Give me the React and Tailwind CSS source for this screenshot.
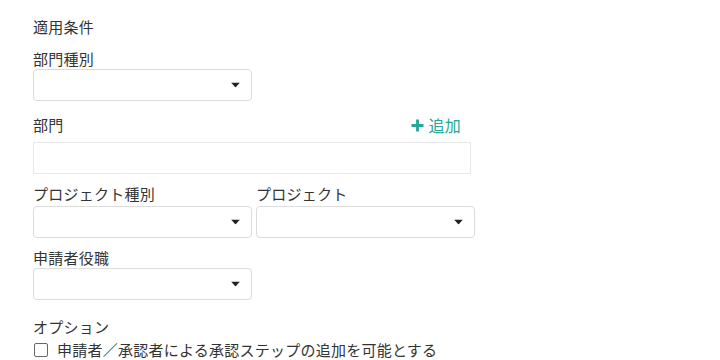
export default function App() {
  const font = { fontFamily: '"Noto Sans CJK JP", "Noto Sans", sans-serif' };

  const Caret = () => (
    <svg width="9" height="5" viewBox="0 0 9 5" className="absolute right-[11px] top-1/2 -translate-y-1/2">
      <path d="M0 0h9L4.5 5z" fill="#222" />
    </svg>
  );

  const Select = ({ className = '' }) => (
    <div className={`relative h-8 w-[219px] rounded border border-[#dcdcdc] bg-white ${className}`}>
      <Caret />
    </div>
  );

  return (
    <div className="w-[720px] h-[360px] bg-white overflow-hidden text-[15px] tracking-[0.25px] text-[#333] px-[33px] pt-[17px]" style={font}>
      <p className="leading-5">適用条件</p>

      {/* 部門種別 */}
      <div className="mt-3">
        <label className="block leading-5">部門種別</label>
        <Select />
      </div>

      {/* 部門 */}
      <div className="mt-[14px] w-[438px]">
        <div className="flex items-center justify-between leading-5">
          <label>部門</label>
          <button className="flex items-center gap-[4px] text-[#26a69a] text-[16px] pr-[10px]">
            <svg width="13" height="13" viewBox="0 0 13 13">
              <path d="M6.5 0.5v12M0.5 6.5h12" stroke="#26a69a" strokeWidth="2.8" />
            </svg>
            追加
          </button>
        </div>
        <div className="mt-[7px] h-8 w-[438px] border border-[#e8e8e8] bg-white" />
      </div>

      {/* プロジェクト */}
      <div className="mt-[10px] grid grid-cols-[219px_219px] gap-x-1">
        <div>
          <label className="block leading-5">プロジェクト種別</label>
          <Select className="mt-[2px]" />
        </div>
        <div>
          <label className="block leading-5">プロジェクト</label>
          <Select className="mt-[2px]" />
        </div>
      </div>

      {/* 申請者役職 */}
      <div className="mt-[10px]">
        <label className="block leading-5">申請者役職</label>
        <Select />
      </div>

      {/* オプション */}
      <div className="mt-[17px]">
        <p className="leading-5">オプション</p>
        <label className="mt-[3px] flex items-center leading-5">
          <span className="ml-px h-[14px] w-[14px] rounded-[2px] border border-[#666] bg-white" />
          <span className="ml-[9px]">申請者／承認者による承認ステップの追加を可能とする</span>
        </label>
      </div>
    </div>
  );
}
